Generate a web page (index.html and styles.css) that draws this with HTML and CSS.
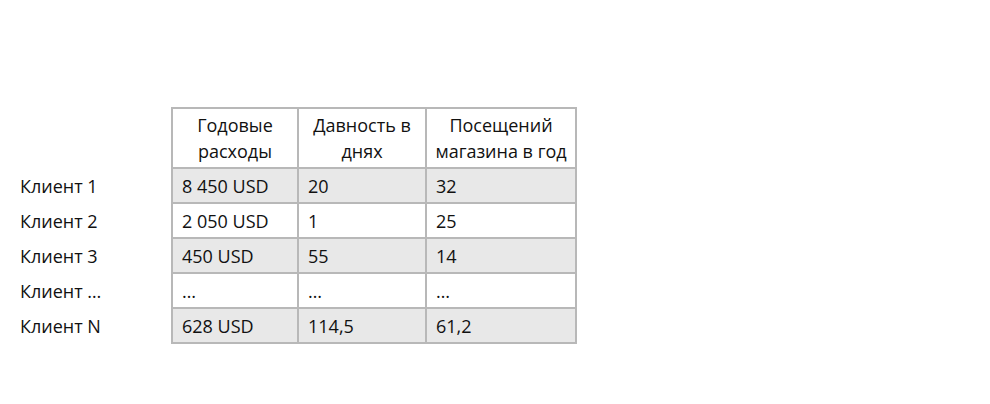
FILE: index.html
```html
<!DOCTYPE html>
<html lang="ru">
<head>
<meta charset="utf-8">
<link rel="stylesheet" href="styles.css">
</head>
<body>
<div class="page">
<table class="grid">
<thead>
<tr><th class="label"></th><th class="c1">Годовые<br>расходы</th><th class="c2">Давность в<br>днях</th><th class="c3">Посещений<br>магазина в год</th></tr>
</thead>
<tbody>
<tr class="shade"><td class="label">Клиент 1</td><td>8 450 USD</td><td>20</td><td>32</td></tr>
<tr><td class="label">Клиент 2</td><td>2 050 USD</td><td>1</td><td>25</td></tr>
<tr class="shade"><td class="label">Клиент 3</td><td>450 USD</td><td>55</td><td>14</td></tr>
<tr><td class="label">Клиент …</td><td>…</td><td>…</td><td>…</td></tr>
<tr class="shade"><td class="label">Клиент N</td><td>628 USD</td><td>114,5</td><td>61,2</td></tr>
</tbody>
</table>
</div>
</body>
</html>
```
FILE: styles.css
```css
html, body { margin: 0; padding: 0; background: #fff; }
body { font-family: "Open Sans", "Noto Sans", sans-serif; color: #111; font-size: 18px; }
.page { padding: 107px 0 0 20px; }
.grid { border-collapse: collapse; }
.grid th, .grid td { border: 2px solid #b8b8b8; padding: 0 0 0 9px; text-align: left; font-weight: normal; height: 33px; line-height: 22px; }
.grid th { height: 58px; text-align: center; padding: 0; line-height: 26px; }
.grid .label { border: none; background: #fff; width: 151px; padding: 0; }
.c1 { width: 124px; }
.c2 { width: 126px; }
.c3 { width: 148px; }
.shade td { background: #e8e8e8; }
.shade td.label { background: #fff; }
```
